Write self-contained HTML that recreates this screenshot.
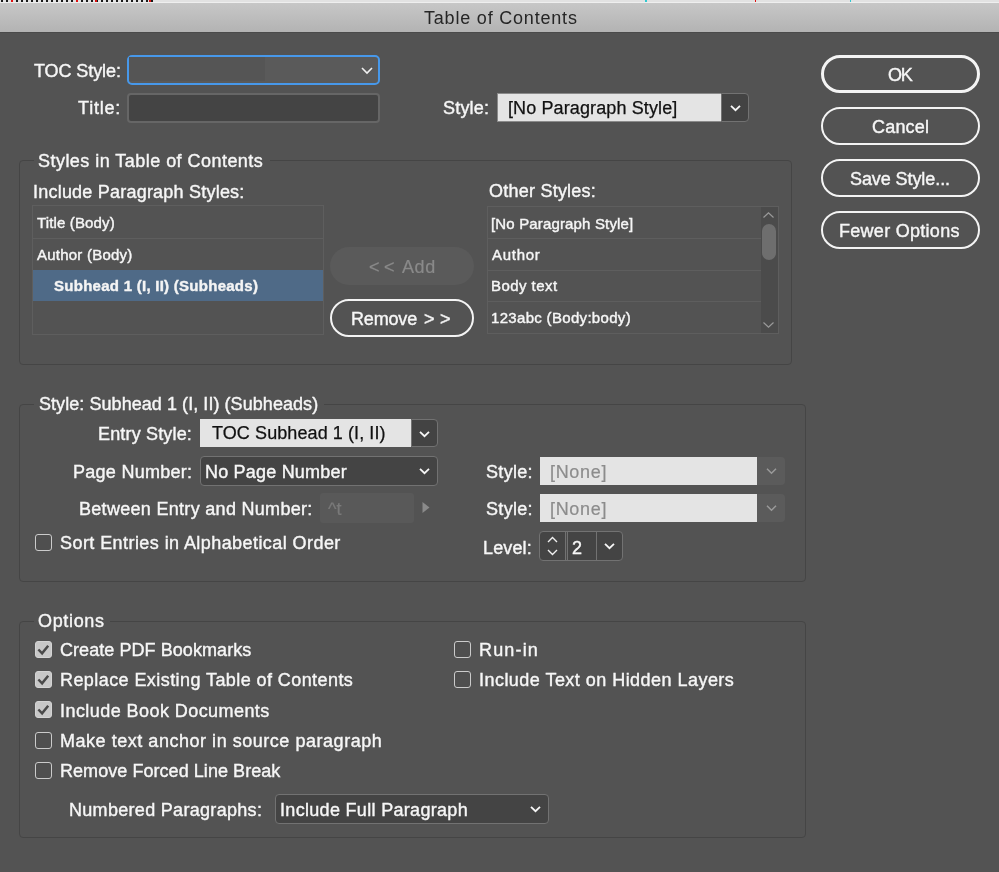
<!DOCTYPE html>
<html><head><meta charset="utf-8">
<style>
*{box-sizing:border-box;margin:0;padding:0}
html,body{width:999px;height:872px;overflow:hidden;background:#535353}
body{position:relative;font-family:"Liberation Sans",sans-serif;color:#f0f0f0}
.a{position:absolute}
.tx{position:absolute;line-height:20px;white-space:pre;will-change:transform;-webkit-text-stroke:0.4px currentColor}
#strip{left:0;top:0;width:999px;height:3px;background:#e2e2e2;border-bottom:1px solid #efefef}
#marks{left:1px;top:0;width:152px;height:2px;background:repeating-linear-gradient(90deg,#1a1a1a 0 1.6px,transparent 1.6px 5px)}
#tbar{left:0;top:3px;width:999px;height:30px;background:linear-gradient(#c7c7c7,#b3b3b3);border-bottom:1px solid #4a4a4a}
.grp{position:absolute;border:1px solid #454545;border-radius:4px}
.gbg{position:absolute;background:#535353;height:4px}
.field{position:absolute;background:#444;border:1px solid #727272;border-radius:4px}
.light{position:absolute;background:#e4e4e4}
.dbtn{position:absolute;background:#434343;border:1px solid #727272;border-radius:0 4px 4px 0}
.btn{position:absolute;left:821px;width:159px;height:38px;border:2px solid #f4f4f4;border-radius:19px}
.cb{position:absolute;width:17px;height:17px;border:1.5px solid #cbcbcb;border-radius:3px;background:#4f4f4f}
.cbk{position:absolute;width:17px;height:17px;background:#c8c8c8;border:1px solid #d4d4d4;border-radius:3px}
.list{position:absolute;border:1px solid #5e5e5e}
.sep{position:absolute;height:1px;background:#5e5e5e}
svg{position:absolute;overflow:visible}
</style></head><body>
<div class="a" id="strip"></div>
<div class="a" id="marks"></div>
<div class="a" style="left:11px;top:0;width:2px;height:2px;background:#e01010"></div>
<div class="a" style="left:76px;top:0;width:2px;height:2px;background:#e01010"></div>
<div class="a" style="left:95px;top:0;width:2px;height:2px;background:#e01010"></div>
<div class="a" style="left:149px;top:0;width:2px;height:2px;background:#e01010"></div>
<div class="a" style="left:645px;top:0;width:2px;height:2px;background:#30c8d0"></div>
<div class="a" style="left:755px;top:0;width:1px;height:2px;background:#e01010"></div>
<div class="a" style="left:850px;top:0;width:1px;height:2px;background:#30c8d0"></div>
<div class="a" id="tbar"></div>

<!-- TOC style / title -->
<div class="a" style="left:127px;top:55px;width:253px;height:30px;border:2px solid #4798ea;border-radius:5px;background:#5a5a5a"></div>
<div class="a" style="left:129px;top:57px;width:136px;height:24px;background:#555"></div>
<svg style="left:361px;top:67px" width="12" height="7"><path d="M1 1 L6 6 L11 1" fill="none" stroke="#f0f0f0" stroke-width="1.6"/></svg>
<div class="field" style="left:127px;top:93px;width:253px;height:30px;border:2px solid #666;background:#444"></div>

<div class="light" style="left:497px;top:93px;width:224px;height:29px;border:1px solid #8a8a8a;border-right:none"></div>
<div class="dbtn" style="left:721px;top:93px;width:28px;height:29px"></div>
<svg style="left:730px;top:105px" width="11" height="6"><path d="M1 0.8 L5.5 5.2 L10 0.8" fill="none" stroke="#f6f6f6" stroke-width="1.8"/></svg>

<!-- buttons -->
<div class="btn" style="top:55px;border-width:3px"></div>
<div class="btn" style="top:107px"></div>
<div class="btn" style="top:159px"></div>
<div class="btn" style="top:211px"></div>

<!-- Styles in TOC group -->
<div class="grp" style="left:19px;top:160px;width:773px;height:205px"></div>
<div class="gbg" style="left:34px;top:158px;width:236px"></div>
<div class="list" style="left:32px;top:205px;width:292px;height:130px"></div>
<div class="sep" style="left:33px;top:238px;width:290px"></div>
<div class="a" style="left:33px;top:270px;width:290px;height:31px;background:#4f6a87"></div>

<div class="a" style="left:330px;top:247px;width:144px;height:38px;border-radius:19px;background:#5a5a5a"></div>
<div class="a" style="left:330px;top:299px;width:144px;height:38px;border:2px solid #f4f4f4;border-radius:19px"></div>

<div class="list" style="left:487px;top:206px;width:292px;height:128px"></div>
<div class="sep" style="left:488px;top:238px;width:273px"></div>
<div class="sep" style="left:488px;top:270px;width:273px"></div>
<div class="sep" style="left:488px;top:301px;width:273px"></div>
<div class="a" style="left:761px;top:207px;width:17px;height:126px;background:#4b4b4b"></div>
<div class="a" style="left:762px;top:224px;width:14px;height:36px;border-radius:7px;background:#6e6e6e"></div>
<svg style="left:763px;top:212px" width="11" height="6"><path d="M0.5 5.5 L5.5 0.8 L10.5 5.5" fill="none" stroke="#9a9a9a" stroke-width="1.2"/></svg>
<svg style="left:763px;top:322px" width="11" height="6"><path d="M0.5 0.5 L5.5 5.2 L10.5 0.5" fill="none" stroke="#9a9a9a" stroke-width="1.2"/></svg>

<!-- Style: Subhead group -->
<div class="grp" style="left:19px;top:404px;width:787px;height:178px"></div>
<div class="gbg" style="left:34px;top:402px;width:290px"></div>
<div class="light" style="left:200px;top:419px;width:211px;height:28px"></div>
<div class="dbtn" style="left:411px;top:419px;width:27px;height:28px"></div>
<svg style="left:419px;top:431px" width="11" height="6"><path d="M1 0.8 L5.5 5.2 L10 0.8" fill="none" stroke="#f6f6f6" stroke-width="1.8"/></svg>

<div class="field" style="left:200px;top:456px;width:238px;height:30px"></div>
<svg style="left:419px;top:468px" width="11" height="6"><path d="M1 0.8 L5.5 5.2 L10 0.8" fill="none" stroke="#f6f6f6" stroke-width="1.8"/></svg>

<div class="a" style="left:320px;top:493px;width:94px;height:30px;background:#595959;border-radius:3px"></div>
<svg style="left:422px;top:502px" width="8" height="11"><path d="M0.5 0 L7.5 5.5 L0.5 11Z" fill="#8a8a8a"/></svg>

<div class="cb" style="left:35px;top:534px"></div>

<div class="light" style="left:540px;top:457px;width:217px;height:28px"></div>
<div class="a" style="left:757px;top:457px;width:28px;height:28px;background:#5b5b5b;border-radius:0 4px 4px 0"></div>
<svg style="left:766px;top:468px" width="11" height="6"><path d="M1 0.8 L5.5 5.2 L10 0.8" fill="none" stroke="#9a9a9a" stroke-width="1.5"/></svg>
<div class="light" style="left:540px;top:494px;width:217px;height:28px"></div>
<div class="a" style="left:757px;top:494px;width:28px;height:28px;background:#5b5b5b;border-radius:0 4px 4px 0"></div>
<svg style="left:766px;top:505px" width="11" height="6"><path d="M1 0.8 L5.5 5.2 L10 0.8" fill="none" stroke="#9a9a9a" stroke-width="1.5"/></svg>

<div class="field" style="left:539px;top:531px;width:84px;height:30px"></div>
<div class="a" style="left:565px;top:532px;width:3px;height:28px;border-left:1px solid #727272;border-right:1px solid #727272;background:#4a4a4a"></div>
<div class="a" style="left:596px;top:532px;width:1px;height:28px;background:#727272"></div>
<svg style="left:547px;top:536px" width="11" height="20"><path d="M1 6 L5.5 1.5 L10 6 M1 14 L5.5 18.5 L10 14" fill="none" stroke="#f0f0f0" stroke-width="1.4"/></svg>
<svg style="left:604px;top:543px" width="11" height="6"><path d="M1 0.8 L5.5 5.2 L10 0.8" fill="none" stroke="#f6f6f6" stroke-width="1.8"/></svg>

<!-- Options group -->
<div class="grp" style="left:19px;top:621px;width:787px;height:217px"></div>
<div class="gbg" style="left:34px;top:619px;width:76px"></div>
<div class="cbk" style="left:35px;top:641px"></div>
<div class="cbk" style="left:35px;top:671px"></div>
<div class="cbk" style="left:35px;top:701px"></div>
<svg style="left:35px;top:641px" width="17" height="17"><path d="M3.4 8.5 L7.1 12.3 L13.2 4.8" fill="none" stroke="#4a4a4a" stroke-width="2.5"/></svg>
<svg style="left:35px;top:671px" width="17" height="17"><path d="M3.4 8.5 L7.1 12.3 L13.2 4.8" fill="none" stroke="#4a4a4a" stroke-width="2.5"/></svg>
<svg style="left:35px;top:701px" width="17" height="17"><path d="M3.4 8.5 L7.1 12.3 L13.2 4.8" fill="none" stroke="#4a4a4a" stroke-width="2.5"/></svg>
<div class="cb" style="left:35px;top:732px"></div>
<div class="cb" style="left:35px;top:762px"></div>
<div class="cb" style="left:454px;top:641px"></div>
<div class="cb" style="left:454px;top:671px"></div>

<div class="field" style="left:275px;top:794px;width:274px;height:30px"></div>
<svg style="left:530px;top:806px" width="11" height="6"><path d="M1 0.8 L5.5 5.2 L10 0.8" fill="none" stroke="#f6f6f6" stroke-width="1.8"/></svg>

<div class="tx" id="tb" style="left:423.50px;top:8px;font-size:18px;-webkit-text-stroke-width:0;color:#262626;letter-spacing:0.800px">Table of Contents</div>
<div class="tx" id="toc" style="left:33.50px;top:61px;font-size:18px;color:#f6f6f6;letter-spacing:-0.089px">TOC Style:</div>
<div class="tx" id="ttl" style="left:77.90px;top:98px;font-size:18px;color:#f6f6f6;letter-spacing:0.800px">Title:</div>
<div class="tx" id="sty" style="left:442.50px;top:98px;font-size:18px;color:#f6f6f6;letter-spacing:0.200px">Style:</div>
<div class="tx" id="nps" style="left:507.60px;top:98px;font-size:18px;-webkit-text-stroke-width:0.25px;color:#111111;letter-spacing:0.116px">[No Paragraph Style]</div>
<div class="tx" id="ok" style="left:887.80px;top:65px;font-size:18px;color:#f6f6f6;letter-spacing:-1.200px">OK</div>
<div class="tx" id="can" style="left:871.60px;top:117px;font-size:18px;color:#f6f6f6;letter-spacing:0.200px">Cancel</div>
<div class="tx" id="sav" style="left:850.00px;top:169px;font-size:18px;color:#f6f6f6;letter-spacing:-0.083px">Save Style...</div>
<div class="tx" id="few" style="left:839.20px;top:221px;font-size:18px;color:#f6f6f6;letter-spacing:0.283px">Fewer Options</div>
<div class="tx" id="sit" style="left:38.40px;top:151px;font-size:18px;color:#f6f6f6;letter-spacing:0.462px">Styles in Table of Contents</div>
<div class="tx" id="inc" style="left:32.60px;top:182px;font-size:18px;color:#f6f6f6;letter-spacing:0.217px">Include Paragraph Styles:</div>
<div class="tx" id="l1" style="left:37.00px;top:213px;font-size:15px;color:#f6f6f6;letter-spacing:0.145px">Title (Body)</div>
<div class="tx" id="l2" style="left:37.00px;top:245px;font-size:15px;color:#f6f6f6;letter-spacing:0.233px">Author (Body)</div>
<div class="tx" id="l3" style="left:54.40px;top:276px;font-size:15px;font-weight:700;color:#f4f4f4;letter-spacing:0.267px">Subhead 1 (I, II) (Subheads)</div>
<div class="tx" id="add1" style="left:369.20px;top:257px;font-size:18px;-webkit-text-stroke-width:0.2px;color:#8a8a8a;letter-spacing:4.400px">&lt;&lt;</div>
<div class="tx" id="add2" style="left:401.80px;top:257px;font-size:18px;-webkit-text-stroke-width:0.2px;color:#8a8a8a;letter-spacing:0.600px">Add</div>
<div class="tx" id="rem1" style="left:351.20px;top:309px;font-size:18px;color:#f6f6f6;letter-spacing:-0.160px">Remove</div>
<div class="tx" id="rem2" style="left:423.60px;top:309px;font-size:18px;color:#f6f6f6;letter-spacing:5.400px">&gt;&gt;</div>
<div class="tx" id="oth" style="left:488.70px;top:181px;font-size:18px;color:#f6f6f6;letter-spacing:0.233px">Other Styles:</div>
<div class="tx" id="o1" style="left:490.90px;top:214px;font-size:15px;color:#f6f6f6;letter-spacing:0.158px">[No Paragraph Style]</div>
<div class="tx" id="o2" style="left:491.50px;top:245px;font-size:15px;color:#f6f6f6;letter-spacing:0.720px">Author</div>
<div class="tx" id="o3" style="left:490.90px;top:276px;font-size:15px;color:#f6f6f6;letter-spacing:0.450px">Body text</div>
<div class="tx" id="o4" style="left:491.00px;top:308px;font-size:15px;color:#f6f6f6;letter-spacing:0.318px">123abc (Body:body)</div>
<div class="tx" id="ssh" style="left:38.70px;top:394px;font-size:18px;color:#f6f6f6;letter-spacing:0.059px">Style: Subhead 1 (I, II) (Subheads)</div>
<div class="tx" id="ent" style="left:98.10px;top:424px;font-size:18px;color:#f6f6f6;letter-spacing:0.164px">Entry Style:</div>
<div class="tx" id="pgn" style="left:73.20px;top:462px;font-size:18px;color:#f6f6f6;letter-spacing:0.273px">Page Number:</div>
<div class="tx" id="bet" style="left:78.60px;top:499px;font-size:18px;color:#f6f6f6;letter-spacing:0.300px">Between Entry and Number:</div>
<div class="tx" id="srt" style="left:60.40px;top:533px;font-size:18px;color:#f6f6f6;letter-spacing:0.430px">Sort Entries in Alphabetical Order</div>
<div class="tx" id="tsh" style="left:211.70px;top:423px;font-size:18px;-webkit-text-stroke-width:0.25px;color:#111111;letter-spacing:0.090px">TOC Subhead 1 (I, II)</div>
<div class="tx" id="npn" style="left:204.70px;top:462px;font-size:18px;color:#f6f6f6;letter-spacing:0.200px">No Page Number</div>
<div class="tx" id="sr1" style="left:485.50px;top:462px;font-size:18px;color:#f6f6f6;letter-spacing:0.320px">Style:</div>
<div class="tx" id="no1" style="left:550.00px;top:462px;font-size:18px;-webkit-text-stroke-width:0.2px;color:#8c8c8c;letter-spacing:0.680px">[None]</div>
<div class="tx" id="sr2" style="left:485.50px;top:499px;font-size:18px;color:#f6f6f6;letter-spacing:0.320px">Style:</div>
<div class="tx" id="no2" style="left:550.00px;top:499px;font-size:18px;-webkit-text-stroke-width:0.2px;color:#8c8c8c;letter-spacing:0.680px">[None]</div>
<div class="tx" id="lvl" style="left:483.30px;top:538px;font-size:18px;color:#f6f6f6;letter-spacing:0.120px">Level:</div>
<div class="tx" id="two" style="left:571.60px;top:538px;font-size:18px;color:#f6f6f6;letter-spacing:0.000px">2</div>
<div class="tx" id="cart" style="left:328.00px;top:499px;font-size:18px;-webkit-text-stroke-width:0.2px;color:#7a7a7a;letter-spacing:0.000px">^t</div>
<div class="tx" id="opt" style="left:38.40px;top:611px;font-size:18px;color:#f6f6f6;letter-spacing:0.667px">Options</div>
<div class="tx" id="c1" style="left:59.60px;top:640px;font-size:18px;color:#f6f6f6;letter-spacing:0.063px">Create PDF Bookmarks</div>
<div class="tx" id="c2" style="left:59.60px;top:670px;font-size:18px;color:#f6f6f6;letter-spacing:0.424px">Replace Existing Table of Contents</div>
<div class="tx" id="c3" style="left:59.60px;top:701px;font-size:18px;color:#f6f6f6;letter-spacing:0.438px">Include Book Documents</div>
<div class="tx" id="c4" style="left:59.60px;top:731px;font-size:18px;color:#f6f6f6;letter-spacing:0.531px">Make text anchor in source paragraph</div>
<div class="tx" id="c5" style="left:59.60px;top:761px;font-size:18px;color:#f6f6f6;letter-spacing:0.052px">Remove Forced Line Break</div>
<div class="tx" id="r1" style="left:478.90px;top:640px;font-size:18px;color:#f6f6f6;letter-spacing:1.160px">Run-in</div>
<div class="tx" id="r2" style="left:478.90px;top:670px;font-size:18px;color:#f6f6f6;letter-spacing:0.464px">Include Text on Hidden Layers</div>
<div class="tx" id="num" style="left:68.50px;top:800px;font-size:18px;color:#f6f6f6;letter-spacing:0.305px">Numbered Paragraphs:</div>
<div class="tx" id="ifp" style="left:280.00px;top:800px;font-size:18px;color:#f6f6f6;letter-spacing:0.314px">Include Full Paragraph</div>
</body></html>
